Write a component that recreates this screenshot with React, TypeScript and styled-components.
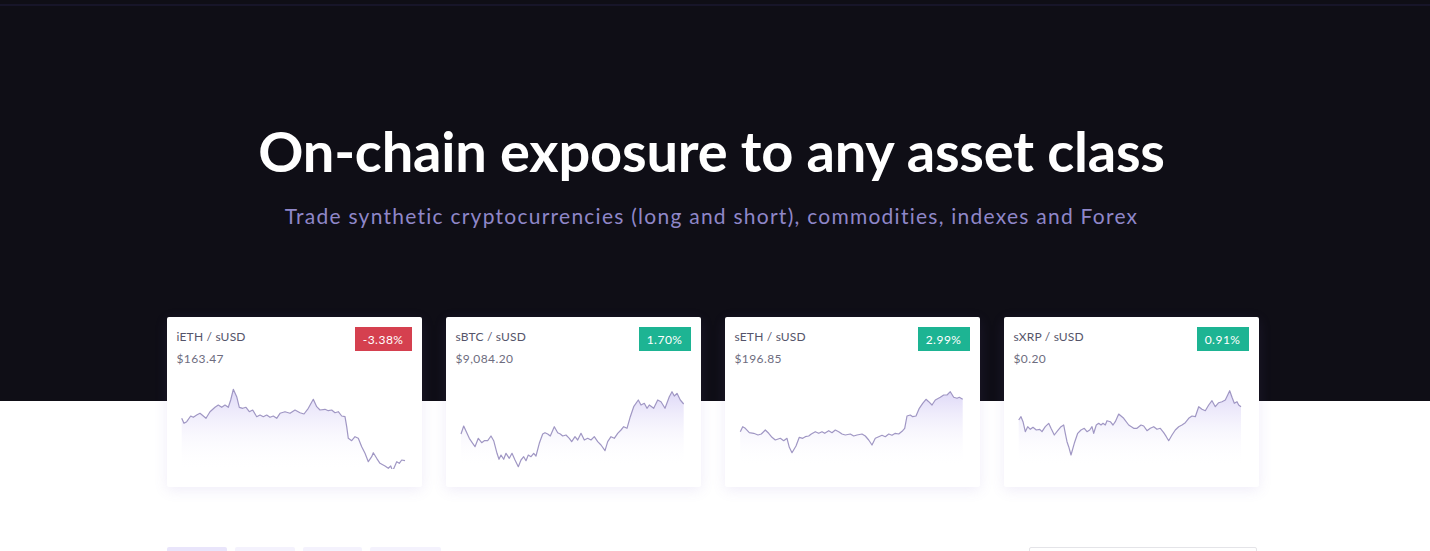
import React from "react";
import styled, { createGlobalStyle } from "styled-components";

const GlobalStyle = createGlobalStyle`
  html, body { margin: 0; padding: 0; background: #ffffff; overflow: hidden; }
  body { font-family: Lato, Inter, "Noto Sans", sans-serif; -webkit-font-smoothing: antialiased; }
  * { box-sizing: border-box; }
`;

const Page = styled.div`
  height: 551px;
  padding-right: 7px;
  background: linear-gradient(to bottom, #0f0e16 0, #0f0e16 401px, #ffffff 401px);
  overflow: hidden;
`;

const TopRule = styled.div`
  margin-top: 4px;
  margin-right: -7px;
  height: 2px;
  background: #171529;
`;

const Hero = styled.section`
  display: flex;
  flex-direction: column;
  align-items: center;
  padding-top: 112px;
`;

const Title = styled.h1`
  margin: 0;
  font-family: Lato, Inter, sans-serif;
  font-weight: 700;
  font-size: 56px;
  line-height: 66px;
  color: #ffffff;
  letter-spacing: -0.2px;
`;

const Subtitle = styled.p`
  margin: 18px 0 0;
  font-family: Lato, Inter, sans-serif;
  font-size: 21px;
  line-height: 28px;
  color: #8f87c9;
  letter-spacing: 1.25px;
`;

const Cards = styled.div`
  width: 1090px;
  margin: 87px auto 0;
  display: grid;
  grid-template-columns: repeat(4, 1fr);
  gap: 24px;
`;

const Card = styled.div`
  background: #ffffff;
  border-radius: 2px;
  padding: 10px 10px 17px;
  height: 170px;
  box-shadow: 0 3px 14px rgba(120, 100, 200, 0.12);
  display: flex;
  flex-direction: column;
`;

const CardHead = styled.div`
  display: flex;
  justify-content: space-between;
  align-items: flex-start;
`;

const Info = styled.div`
  display: flex;
  flex-direction: column;
  padding-top: 3px;
  gap: 8px;
`;

const Pair = styled.span`
  font-size: 12px;
  line-height: 14px;
  color: #55546a;
  letter-spacing: 0.2px;
`;

const Price = styled.span`
  font-size: 12px;
  line-height: 14px;
  color: #6e6d80;
  letter-spacing: 0.4px;
`;

const Badge = styled.span<{ $neg: boolean }>`
  display: inline-flex;
  align-items: center;
  justify-content: center;
  height: 24px;
  padding: 0 8px;
  min-width: 49px;
  background: ${(p) => (p.$neg ? "#d5404f" : "#1db493")};
  color: #ffffff;
  font-size: 12px;
  letter-spacing: 0.5px;
`;

const Chart = styled.svg`
  display: block;
  margin-top: 13px;
  width: 235px;
  height: 90px;
`;

const Toolbar = styled.div`
  width: 1090px;
  margin: 60px auto 0;
  display: flex;
  justify-content: space-between;
`;

const Tabs = styled.div`
  display: flex;
  gap: 8px;
`;

const Tab = styled.div<{ $active?: boolean; $w: number }>`
  width: ${(p) => p.$w}px;
  height: 32px;
  border-radius: 2px;
  background: ${(p) => (p.$active ? "#e9e5fb" : "#f4f2fd")};
`;

const Search = styled.div`
  width: 228px;
  height: 32px;
  border: 1px solid #e4e4e8;
  border-radius: 2px;
`;

type P = [number, number];

const raw: { label: string; price: string; change: string; neg: boolean; dx: number; pts: P[] }[] = [
  {
    label: "iETH / sUSD",
    price: "$163.47",
    change: "-3.38%",
    neg: true,
    dx: -7,
    pts: [[65,325],[72,340],[80,335],[92,318],[100,322],[110,315],[120,310],[130,318],[138,325],[150,305],[165,292],[175,285],[185,292],[195,285],[205,292],[212,270],[220,238],[230,260],[238,292],[248,295],[258,292],[268,305],[278,300],[290,320],[300,315],[310,320],[320,315],[330,322],[340,318],[350,325],[360,310],[375,305],[390,310],[405,300],[420,308],[432,312],[445,295],[460,268],[470,290],[480,300],[495,298],[505,302],[515,300],[525,308],[535,305],[545,318],[555,320],[560,350],[565,385],[575,392],[585,380],[595,385],[605,410],[615,430],[625,455],[635,440],[640,428],[650,445],[660,460],[675,468],[685,475],[692,468],[698,483],[710,455],[718,460],[725,450],[735,452]],
  },
  {
    label: "sBTC / sUSD",
    price: "$9,084.20",
    change: "1.70%",
    neg: false,
    dx: -5,
    pts: [[60,372],[68,348],[78,370],[85,385],[95,400],[102,410],[112,385],[122,398],[130,392],[140,392],[150,378],[158,392],[168,430],[174,448],[180,435],[188,448],[195,430],[205,445],[213,430],[222,450],[232,470],[240,450],[248,440],[255,452],[262,435],[270,440],[278,430],[285,438],[295,400],[305,372],[312,368],[320,372],[328,378],[340,350],[350,368],[358,372],[365,378],[375,375],[385,385],[392,395],[402,380],[410,390],[420,370],[430,390],[440,385],[450,390],[460,380],[470,395],[480,405],[492,422],[500,395],[510,380],[520,385],[530,370],[540,360],[548,350],[558,355],[568,320],[578,290],[592,270],[600,285],[610,280],[618,295],[625,285],[638,295],[650,270],[660,275],[672,295],[685,260],[693,245],[700,258],[708,250],[718,270],[728,282]],
  },
  {
    label: "sETH / sUSD",
    price: "$196.85",
    change: "2.99%",
    neg: false,
    dx: -3,
    pts: [[55,365],[62,350],[70,355],[82,368],[95,370],[108,375],[118,372],[130,360],[140,370],[150,382],[160,390],[175,385],[185,392],[195,385],[202,412],[210,428],[222,408],[232,382],[242,385],[250,380],[260,378],[268,372],[280,365],[290,370],[300,365],[308,370],[320,362],[330,368],[340,360],[350,365],[360,372],[370,375],[385,372],[395,378],[405,375],[420,372],[430,378],[440,390],[450,405],[460,385],[470,380],[480,376],[490,380],[500,372],[510,376],[520,370],[530,372],[542,362],[548,355],[555,318],[565,315],[572,320],[582,318],[592,295],[602,280],[612,268],[620,275],[630,285],[640,270],[655,262],[665,255],[675,255],[685,245],[695,262],[705,265],[712,262],[722,268]],
  },
  {
    label: "sXRP / sUSD",
    price: "$0.20",
    change: "0.91%",
    neg: false,
    dx: -7,
    pts: [[65,330],[72,320],[78,335],[85,365],[92,350],[100,358],[108,352],[118,360],[128,358],[135,365],[145,350],[155,340],[162,355],[172,375],[182,362],[192,350],[200,345],[205,370],[210,395],[215,410],[222,435],[232,400],[242,370],[252,360],[262,355],[270,365],[278,360],[285,350],[290,370],[298,345],[305,340],[312,345],[318,340],[325,345],[330,332],[340,335],[348,345],[355,335],[365,312],[380,325],[395,345],[410,355],[420,355],[432,345],[440,348],[450,362],[460,355],[470,350],[480,358],[490,355],[500,368],[508,380],[515,392],[525,375],[535,360],[545,350],[555,345],[565,338],[575,325],[585,318],[595,320],[605,290],[615,298],[625,302],[635,285],[645,272],[655,290],[665,278],[675,275],[685,270],[692,255],[698,242],[705,262],[712,280],[720,275],[725,285],[732,290]],
  },
];

const FILL_BOTTOM = 150;

function Spark({ pts, dx, id }: { pts: P[]; dx: number; id: string }) {
  const local = pts.map(([x, y]) => [x / 3 + dx, y / 3 - 7] as P);
  const line = local.map(([x, y], i) => `${i ? "L" : "M"}${x.toFixed(1)} ${y.toFixed(1)}`).join(" ");
  const first = local[0];
  const last = local[local.length - 1];
  const area = `${line} L${last[0].toFixed(1)} ${FILL_BOTTOM} L${first[0].toFixed(1)} ${FILL_BOTTOM} Z`;
  return (
    <Chart viewBox="10 62 235 90" preserveAspectRatio="none">
      <defs>
        <linearGradient id={id} x1="0" y1="0" x2="0" y2="1">
          <stop offset="0%" stopColor="#d9d2f6" stopOpacity="0.85" />
          <stop offset="100%" stopColor="#ffffff" stopOpacity="0" />
        </linearGradient>
      </defs>
      <path d={area} fill={`url(#${id})`} />
      <path d={line} fill="none" stroke="#a097c4" strokeWidth="1.2" strokeLinejoin="round" />
    </Chart>
  );
}

export default function App() {
  return (
    <>
      <GlobalStyle />
      <Page>
        <TopRule />
        <Hero>
          <Title>On-chain exposure to any asset class</Title>
          <Subtitle>Trade synthetic cryptocurrencies (long and short), commodities, indexes and Forex</Subtitle>
        </Hero>
        <Cards>
          {raw.map((c, i) => (
            <Card key={c.label}>
              <CardHead>
                <Info>
                  <Pair>{c.label}</Pair>
                  <Price>{c.price}</Price>
                </Info>
                <Badge $neg={c.neg}>{c.change}</Badge>
              </CardHead>
              <Spark pts={c.pts} dx={c.dx} id={`g${i}`} />
            </Card>
          ))}
        </Cards>
        <Toolbar>
          <Tabs>
            <Tab $active $w={60} />
            <Tab $w={60} />
            <Tab $w={59} />
            <Tab $w={71} />
          </Tabs>
          <Search />
        </Toolbar>
      </Page>
    </>
  );
}
